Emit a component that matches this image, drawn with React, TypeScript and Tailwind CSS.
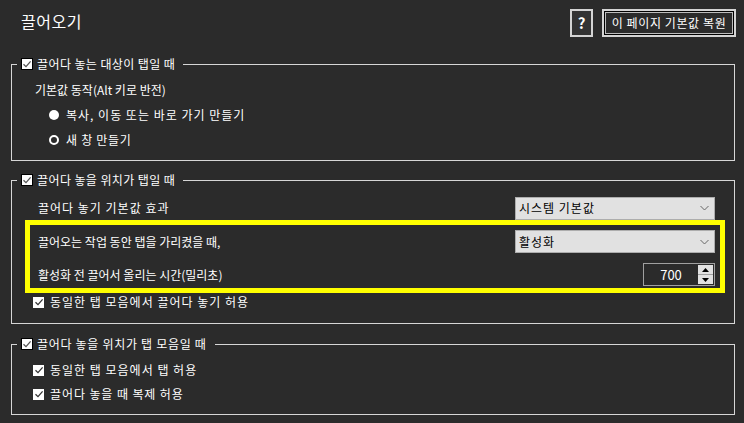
import type { ReactNode } from 'react'

function Check({ boxed = false }: { boxed?: boolean }) {
  return (
    <span
      className={
        boxed
          ? 'flex h-[12px] w-[12px] shrink-0 items-center justify-center border border-black bg-white'
          : 'flex h-[11px] w-[11px] shrink-0 items-center justify-center bg-white'
      }
    >
      <svg width="10" height="10" viewBox="0 0 10 10">
        <path d="M1.5 5.2 L4 7.6 L8.6 2.4" fill="none" stroke={boxed ? '#555' : '#333'} strokeWidth="1.3" />
      </svg>
    </span>
  )
}

function Group({
  title,
  tracking,
  children,
  className,
}: {
  title: string
  tracking: string
  children: ReactNode
  className?: string
}) {
  return (
    <fieldset className={`border border-[#d6d6d6] ${className ?? ''}`}>
      <legend className="ml-[5px] flex h-[14px] items-center gap-[4px] pl-[4px] pr-[8px] leading-[14px]">
        <Check boxed />
        <span className={tracking}>{title}</span>
      </legend>
      {children}
    </fieldset>
  )
}

function Select({ value }: { value: string }) {
  return (
    <div className="flex h-[23px] w-[200px] items-center justify-between border border-[#adadad] bg-[#e1e1e1] pl-[3px] pr-[5px] text-black">
      <span className="tracking-[1px]">{value}</span>
      <svg width="9" height="6" viewBox="0 0 9 6">
        <path d="M0.5 1 L4.5 5 L8.5 1" fill="none" stroke="#666" strokeWidth="1" />
      </svg>
    </div>
  )
}

function Spin({ value }: { value: string }) {
  return (
    <div className="flex h-[23px] w-[72px] items-stretch border border-[#a0a0a0] bg-[#2b2b2b]">
      <span className="flex flex-1 items-center justify-center text-[13px]">{value}</span>
      <div className="my-[1px] mr-[1px] flex w-[15px] flex-col gap-[1px] bg-[#a0a0a0]">
        <div className="flex flex-1 items-center justify-center bg-[#e1e1e1]">
          <svg width="7" height="4" viewBox="0 0 7 4">
            <path d="M0 4 L3.5 0 L7 4 Z" fill="#000" />
          </svg>
        </div>
        <div className="flex flex-1 items-center justify-center bg-[#e1e1e1]">
          <svg width="7" height="4" viewBox="0 0 7 4">
            <path d="M0 0 L3.5 4 L7 0 Z" fill="#000" />
          </svg>
        </div>
      </div>
    </div>
  )
}

export default function App() {
  return (
    <div className="h-[423px] w-[744px] overflow-hidden bg-[#2b2b2b] pl-[11px] pr-[9px] text-[12px] text-white font-['Noto_Sans_CJK_KR','Noto_Sans',sans-serif]">
      <div className="ml-[10px] mr-[-1px] mt-[9px] flex h-[28px] items-start">
        <h1 className="text-[16px] leading-[25px] tracking-[0.5px]">끌어오기</h1>
        <div className="ml-auto flex gap-[9px]">
          <button className="flex h-[28px] w-[23px] items-center justify-center border-2 border-[#d4d4d4] bg-[#333] text-[15px] font-bold">
            ?
          </button>
          <button className="h-[28px] w-[134px] border-2 border-[#d4d4d4] bg-[#2b2b2b]">
            <div className="flex h-full items-center justify-center border border-black">
              <div className="flex h-full w-full items-center justify-center border border-[#bdbdbd] bg-[#2b2b2b] tracking-[0.6px]">
                이 페이지 기본값 복원
              </div>
            </div>
          </button>
        </div>
      </div>

      <Group title="끌어다 놓는 대상이 탭일 때" tracking="tracking-[0.4px]" className="mt-[20px]">
        <div className="pb-[8px] pl-[23px] pt-[6px]">
          <div className="flex h-[25px] items-center">기본값 동작(Alt 키로 반전)</div>
          <div className="flex h-[25px] items-center gap-[7px] pl-[14px]">
            <span className="h-[10px] w-[10px] rounded-full bg-white" />
            <span className="tracking-[1px]">복사, 이동 또는 바로 가기 만들기</span>
          </div>
          <div className="flex h-[25px] items-center gap-[7px] pl-[14px]">
            <span className="h-[10px] w-[10px] rounded-full border-[2px] border-white" />
            <span className="tracking-[0.7px]">새 창 만들기</span>
          </div>
        </div>
      </Group>

      <Group title="끌어다 놓을 위치가 탭일 때" tracking="tracking-[0.4px]" className="mt-[12px]">
        <div className="pb-[12px] pt-[10px]">
          <div className="flex h-[22px] items-center justify-between pl-[26px] pr-[19px]">
            <span className="tracking-[1px]">끌어다 놓기 기본값 효과</span>
            <Select value="시스템 기본값" />
          </div>
          <div className="ml-[13px] mr-[9px] mt-[1px] border-[5px] border-[#ffff00] pb-[2px] pl-[8px] pr-[5px] pt-[5px]">
            <div className="flex h-[23px] items-center justify-between">
              <span>끌어오는 작업 동안 탭을 가리켰을 때,</span>
              <Select value="활성화" />
            </div>
            <div className="mt-[10px] flex h-[23px] items-center justify-between">
              <span>활성화 전 끌어서 올리는 시간(밀리초)</span>
              <Spin value="700" />
            </div>
          </div>
          <div className="flex h-[18px] items-center gap-[6px] pl-[21px]">
            <Check />
            <span className="tracking-[1px]">동일한 탭 모음에서 끌어다 놓기 허용</span>
          </div>
        </div>
      </Group>

      <Group title="끌어다 놓을 위치가 탭 모음일 때" tracking="tracking-[0.7px]" className="mt-[13px]">
        <div className="flex flex-col gap-[6px] pb-[11px] pl-[21px] pt-[10px]">
          <div className="flex h-[18px] items-center gap-[6px]">
            <Check />
            <span className="tracking-[1px]">동일한 탭 모음에서 탭 허용</span>
          </div>
          <div className="flex h-[18px] items-center gap-[6px]">
            <Check />
            <span className="tracking-[0.9px]">끌어다 놓을 때 복제 허용</span>
          </div>
        </div>
      </Group>
    </div>
  )
}
